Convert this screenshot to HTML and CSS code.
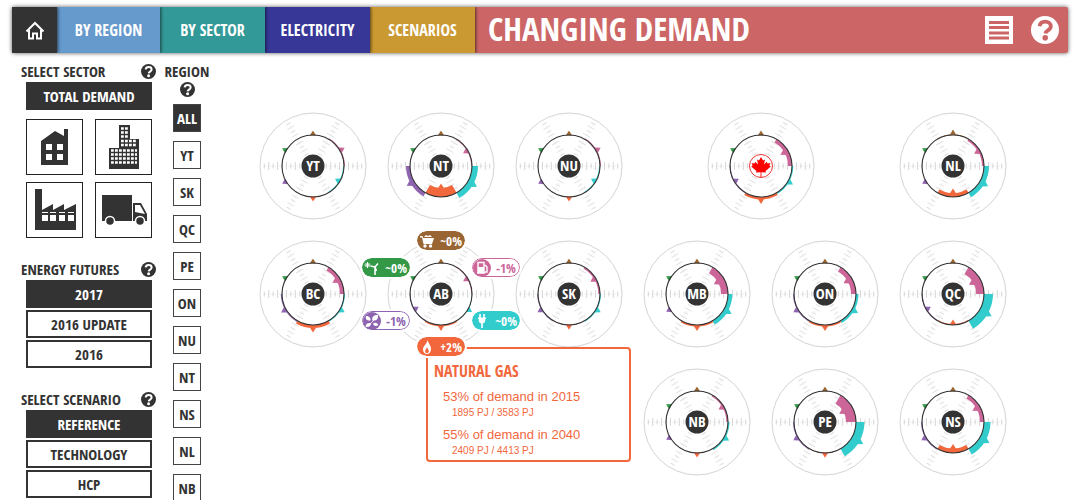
FILE: index.html
```html
<!DOCTYPE html>
<html lang="en">
<head>
<meta charset="utf-8">
<title>Changing Demand</title>
<link rel="stylesheet" href="styles.css">
</head>
<body>
<svg class="defs" aria-hidden="true">
  <symbol id="i-help" viewBox="0 0 28 28"><circle cx="14" cy="14" r="14" fill="var(--disc)"/><path d="M8.600 10.200C9 7.200 11.200 5.600 14.200 5.600c3.400 0 5.600 1.800 5.600 4.600 0 4-5 4-5.400 7.200" fill="none" stroke="var(--mark)" stroke-width="3.800"/><circle cx="14.200" cy="21.800" r="2.800" fill="var(--mark)"/></symbol>
</svg>
<header class="bar">
  <nav class="tabs">
    <a class="tab tab-home" href="#home" aria-label="Home"><svg width="20" height="20" viewBox="0 0 20 20"><path d="M1.500 11.500 10 3l8.500 8.500M4 10v8.500h4v-5h4v5h4V10" fill="none" stroke="#fff" stroke-width="2"/></svg></a>
    <a class="tab tab-region" href="#region">BY REGION</a>
    <a class="tab tab-sector" href="#sector">BY SECTOR</a>
    <a class="tab tab-electricity" href="#electricity">ELECTRICITY</a>
    <a class="tab tab-scenarios" href="#scenarios">SCENARIOS</a>
  </nav>
  <h1 class="title">CHANGING DEMAND</h1>
  <div class="tools">
    <button class="icon-btn" aria-label="Menu"><svg width="28" height="28" viewBox="0 0 28 28"><path fill="#fff" d="M0 0h28v28H0z"/><path d="M4 6.500h20M4 11.500h20M4 17h20M4 22h20" stroke="#cc6666" stroke-width="3"/></svg></button>
    <button class="icon-btn help-light" aria-label="Help"><svg width="28" height="28"><use href="#i-help"/></svg></button>
  </div>
</header>
<div class="page">
  <aside class="side">
    <section class="group">
      <div class="head"><h2>SELECT SECTOR</h2><button class="icon-btn" aria-label="About sectors"><svg width="15" height="15"><use href="#i-help"/></svg></button></div>
      <div class="choices">
        <button class="choice on">TOTAL DEMAND</button>
        <div class="tiles">
          <button class="tile" aria-label="Residential"><svg width="52" height="52" viewBox="0 0 52 52"><path fill="#333" fill-rule="evenodd" d="M12 20 26 10l9 5V8h4v36H12zM17 23v6h6v-6zm11 0v6h6v-6zM17 33v6h6v-6zm11 0v6h6v-6z"/></svg></button>
          <button class="tile" aria-label="Commercial"><svg width="52" height="52" viewBox="0 0 52 52"><path fill="#333" d="M11 27h10V4h11v14h9v30H11z"/><path d="M23 7.500h7M23 11.500h7M23 15.500h7M23 20h16M23 24h16M13 29.500h26M13 33.500h26M13 37.500h26M13 41.500h26" stroke="#fff" stroke-width="2.600" stroke-dasharray="2.800 1.200"/></svg></button>
          <button class="tile" aria-label="Industrial"><svg width="52" height="52" viewBox="0 0 52 52"><path fill="#333" d="M6 5h7v21l11-6v6l11-6v6l12-6v26H6z"/><path fill="#fff" d="M13 28h6v1h-6zm8 0h6v1h-6zm9 0h6v1h-6zm9 0h6v1h-6zM13 31h6v6h-6zm8 0h6v6h-6zm9 0h6v6h-6zm9 0h6v6h-6z"/></svg></button>
          <button class="tile" aria-label="Transportation"><svg width="52" height="52" viewBox="0 0 52 52"><path fill="#333" d="M4 11h30v26H4zM35 19h8l6 11v7H35z"/><path fill="#fff" d="M37 21h5l5 9-10-2z"/><circle cx="12" cy="37" r="4.500" fill="#333" stroke="#fff" stroke-width="1.500"/><circle cx="42" cy="37" r="4.500" fill="#333" stroke="#fff" stroke-width="1.500"/></svg></button>
        </div>
      </div>
    </section>
    <section class="group">
      <div class="head"><h2>ENERGY FUTURES</h2><button class="icon-btn" aria-label="About Energy Futures"><svg width="15" height="15"><use href="#i-help"/></svg></button></div>
      <div class="choices">
        <button class="choice on">2017</button>
        <button class="choice">2016 UPDATE</button>
        <button class="choice">2016</button>
      </div>
    </section>
    <section class="group">
      <div class="head"><h2>SELECT SCENARIO</h2><button class="icon-btn" aria-label="About scenarios"><svg width="15" height="15"><use href="#i-help"/></svg></button></div>
      <div class="choices">
        <button class="choice on">REFERENCE</button>
        <button class="choice">TECHNOLOGY</button>
        <button class="choice">HCP</button>
      </div>
    </section>
  </aside>
  <section class="regions">
    <h2>REGION</h2>
    <button class="icon-btn" aria-label="About regions"><svg width="15" height="15"><use href="#i-help"/></svg></button>
    <div class="region-list">
      <button class="region on">ALL</button>
      <button class="region">YT</button>
      <button class="region">SK</button>
      <button class="region">QC</button>
      <button class="region">PE</button>
      <button class="region">ON</button>
      <button class="region">NU</button>
      <button class="region">NT</button>
      <button class="region">NS</button>
      <button class="region">NL</button>
      <button class="region">NB</button>
    </div>
  </section>
  <main class="map">
    <div class="cell" data-region="YT"></div>
    <div class="cell" data-region="NT"></div>
    <div class="cell" data-region="NU"></div>
    <div class="cell cell-wide" data-region="CA"></div>
    <div class="cell" data-region="NL"></div>
    <div class="cell cell-open" data-region="BC"></div>
    <div class="cell cell-active" data-region="AB">
      <div class="detail">
        <h3>NATURAL GAS</h3>
        <p class="share">53% of demand in 2015</p>
        <p class="amount">1895 PJ / 3583 PJ</p>
        <p class="share">55% of demand in 2040</p>
        <p class="amount">2409 PJ / 4413 PJ</p>
      </div>
      <button class="pill coal"><svg width="16" height="16" viewBox="0 0 16 16"><path fill="#fff" d="M1 3h2.500l.5 2h11l-2 6H4.500L3 4.500H1zM5 4l2-2 2 1 2-1 2 2z"/><circle cx="6" cy="13" r="1.700" fill="#fff"/><circle cx="11.500" cy="13" r="1.700" fill="#fff"/></svg><span>~0%</span></button>
      <button class="pill wind"><svg width="16" height="16" viewBox="0 0 16 16"><path d="M3.500 2v6M.5 5h6M1.500 3l4 4M5.500 3l-4 4" stroke="#fff"/><path d="M11 7v8M11 7 6.500 6M11 7l3-3.500M11 7l1.500 4" stroke="#fff" stroke-width="1.600"/></svg><span>~0%</span></button>
      <button class="pill oil"><svg width="18" height="18" viewBox="0 0 18 18"><circle cx="9" cy="9" r="9" fill="#cc6699"/><path d="M5 3.500h6v10H5zM4 14h8M12 6l2 2v5h-2" fill="none" stroke="#fff" stroke-width="1.400"/><path fill="#fff" d="M5 8h6v5H5z"/></svg><span>-1%</span></button>
      <button class="pill bio"><svg width="18" height="18" viewBox="0 0 18 18"><circle cx="9" cy="9" r="9" fill="#8e63b0"/><path fill="#fff" d="M7.500 8.500C4 9 2 7 3 4c3 0 5 2 4.500 4.500zM9.500 8.500C8.500 5 10.500 3 15 3c.5 4-1.500 6-5.500 5.500zM10 11.500c3-1.500 5-.5 5 2-3 1-4.500 0-5-2zM8 11c0 3.500-2.500 4.500-5.500 3.500C3 11.500 5 10.500 8 11z"/><path d="M3 15c3-2 6-4 10-10" fill="none" stroke="#fff" stroke-width=".8"/></svg><span>-1%</span></button>
      <button class="pill elec"><svg width="16" height="16" viewBox="0 0 16 16"><path d="M6 1v4M10 1v4M8 9v6" stroke="#fff" stroke-width="1.600"/><path fill="#fff" d="M4 4.500h8V6h-.8v1.500c0 2-1.200 3-3.200 3s-3.200-1-3.200-3V6H4z"/></svg><span>~0%</span></button>
      <button class="pill gas"><svg width="16" height="16" viewBox="0 0 16 16"><path fill="#fff" fill-rule="evenodd" d="M8.500 1c.5 3 3.500 5 3.500 9 0 3-1.700 5-4 5s-4-2-4-4.600C4 7 8 5 8.500 1zM8 8c-.5 2-1.800 2.500-1.800 4.200C6.200 13.500 7 14 8 14s1.800-.7 1.800-1.800C9.800 10.500 8.500 10 8 8z"/></svg><span>+2%</span></button>
    </div>
    <div class="cell" data-region="SK"></div>
    <div class="cell" data-region="MB"></div>
    <div class="cell" data-region="ON"></div>
    <div class="cell" data-region="QC"></div>
    <div class="cell cell-east" data-region="NB"></div>
    <div class="cell" data-region="PE"></div>
    <div class="cell" data-region="NS"></div>
  </main>
</div>
<script src="wheels.js"></script>
</body>
</html>
```
FILE: styles.css
```css
:root {
  --ink: #333333;
  --disc: #333333;
  --mark: #ffffff;
  --gas: #f2673c;
  --narrow: "Avenir Next Condensed", "Open Sans Condensed", "Roboto Condensed", "Liberation Sans Narrow", "Open Sans", sans-serif;
}
* { box-sizing: border-box; }
body { margin: 0; background: #fff; color: var(--ink); font-family: var(--narrow); font-weight: 700; overflow-x: hidden; }
h1, h2, h3, p { margin: 0; font-weight: 700; }
button { font: inherit; color: inherit; padding: 0; border: 0; background: none; cursor: pointer; }
svg { display: block; }
.defs { width: 0; height: 0; position: absolute; }

.bar { display: flex; height: 46px; margin: 7px 11px 0 12px; background: #cc6666; border-radius: 2px; box-shadow: 0 0 4px #555; color: #fff; }
.tabs { display: flex; }
.tab { display: flex; align-items: center; justify-content: center; width: 105px; color: #fff; text-decoration: none; font-size: 16px; box-shadow: 1px 0 3px rgba(0, 0, 0, .6); clip-path: inset(0 -4px 0 0); }
.tab-home { width: 45px; background: #333; z-index: 5; }
.tab-region { width: 103px; background: #6699cc; z-index: 4; }
.tab-sector { background: #339998; z-index: 3; }
.tab-electricity { background: #363796; z-index: 2; }
.tab-scenarios { background: #cb9932; z-index: 1; }
.title { flex: 1; padding-left: 13px; font-size: 33px; line-height: 44px; white-space: nowrap; }
.tools { display: flex; align-items: center; gap: 18px; padding-right: 9px; }
.help-light { --disc: #ffffff; --mark: #cc6666; }

.page { display: flex; align-items: flex-start; }
.side { width: 135px; margin-left: 21px; padding-top: 9px; }
.head { display: flex; align-items: center; justify-content: space-between; height: 18px; }
h2 { font-size: 15px; line-height: 18px; white-space: nowrap; }
.group { margin-bottom: 22px; }
.choices { display: flex; flex-direction: column; gap: 2px; padding: 2px 4px 0 5px; }
.choice { height: 28px; border: 2px solid var(--ink); font-size: 15px; line-height: 20px; }
.on { background: var(--ink); color: #fff; }
.tiles { display: grid; grid-template-columns: 57px 57px; justify-content: space-between; gap: 7px 0; padding-top: 7px; }
.tile { height: 56px; border: 1px solid #222; display: grid; place-items: center; }

.regions { display: flex; flex-direction: column; align-items: center; width: 44px; margin-left: 9px; padding-top: 9px; }
.regions .icon-btn { margin-top: 2px; }
.region-list { display: flex; flex-direction: column; gap: 9px; padding-top: 7px; }
.region { width: 28px; height: 28px; border: 1px solid #444; font-size: 15px; line-height: 20px; }

.map { flex: 1; display: grid; grid-template-columns: repeat(6, 1fr); padding: 49px 62px 0 40px; }
.cell { height: 128px; display: grid; place-items: center; position: relative; }
.cell-wide { grid-column: span 2; }
.cell-open { grid-column-start: 1; }
.cell-east { grid-column-start: 4; }
.cell-active { z-index: 1; }
.wheel { width: 108px; height: 108px; }
.wheel text { font-family: var(--narrow); font-weight: 700; font-size: 15px; fill: #fff; text-anchor: middle; }

.pill { position: absolute; display: flex; align-items: center; justify-content: space-between; width: 48px; height: 19px; padding: 0 3px 0 2px; border-radius: 10px; color: #fff; font-size: 13px; line-height: 18px; outline: 2px solid #fff; left: calc(50% - 24px); }
.coal { top: 1px; background: #996633; }
.wind { top: 28px; margin-left: -55px; background: #339947; }
.oil { top: 28px; margin-left: 55px; background: #fff; color: #cc6699; border: 1px solid #cc6699; padding-left: 0; }
.bio { top: 81px; margin-left: -55px; background: #fff; color: #8e63b0; border: 1px solid #8e63b0; padding-left: 0; }
.elec { top: 81px; margin-left: 55px; background: #33cccc; }
.gas { top: 107px; background: var(--gas); }
.detail { position: absolute; left: calc(50% - 15px); top: 117px; width: 205px; padding: 12px 6px 3px; border: 2px solid var(--gas); border-radius: 4px; color: var(--gas); }
.detail h3 { font-size: 16px; line-height: 20px; }
.share { padding: 6px 0 0 9px; font-family: "Liberation Sans Narrow", "Liberation Sans", sans-serif; font-size: 13px; line-height: 19px; font-weight: 400; white-space: nowrap; }
.amount { padding-left: 18px; font-family: "Liberation Sans Narrow", "Liberation Sans", sans-serif; font-size: 10px; line-height: 13px; font-weight: 400; }
```
FILE: wheels.js
```js
// Change in share per fuel, in ring units: positive grows outward, negative inward.
// Order: coal, oil, electricity, gas, bio, wind (clockwise from the top).
const fuels = ['#996633', '#cc6699', '#33cccc', '#f2673c', '#8e63b0', '#339947'];
const regions = {
  YT: [0, 0.9, -1, 0, 0, 0],
  NT: [0, -0.9, 6, -9, 4, 0],
  NU: [0, 0.9, -1, 0, 0, 0],
  CA: [0, -4, 1.3, 2.4, -0.8, 0],
  NL: [0.8, -2, 5, -4, 0, 0],
  BC: [0, -4, 1, 3, 1.2, 0],
  AB: [0, -0.8, 0.3, 1.4, -0.7, 0],
  SK: [0, -1.7, 1, 0.2, 0.8, 0],
  MB: [0, -7, 4.3, 1.5, 0, 0],
  ON: [0, -5, 2.5, 1.5, 1, 0],
  QC: [0, -8, 9, -1, -0.8, 0],
  NB: [0, -1.6, 1.5, 0, 0, 0],
  PE: [0, -10, 8.5, 0.2, 1, 0],
  NS: [0, -4, 6.5, -4.5, 1, 0]
};
const RING = 31;

function point(r, deg) {
  const a = (deg - 90) * Math.PI / 180;
  return (r * Math.cos(a)).toFixed(2) + ' ' + (r * Math.sin(a)).toFixed(2);
}

function axis(deg) {
  let d = '';
  for (let k = -4; k <= 4; k++) {
    const r = RING + k * 4.43;
    d += k % 2 ? `M-4 ${-r}h8` : `M-2.500 ${-r}h5`;
  }
  const tone = deg % 180 === 90 ? '#d6d6d6' : '#e2e2e2';
  return `<g transform="rotate(${deg})" stroke="${tone}"><path d="${d}"/><path d="M0-13V-50" stroke-dasharray="1 1.200" opacity=".5"/></g>`;
}

function segment(value, i) {
  const mid = i * 60;
  const edge = RING + value;
  const dir = value < 0 ? -1 : 1;
  const arc = value
    ? `<path fill="${fuels[i]}" d="M${point(RING, mid - 30)}A${RING} ${RING} 0 0 1 ${point(RING, mid + 30)}L${point(edge, mid + 30)}A${edge} ${edge} 0 0 0 ${point(edge, mid - 30)}Z"/>`
    : '';
  return arc + `<path transform="rotate(${mid})" fill="${fuels[i]}" d="M-3.200 ${-edge + dir * 0.6}h6.400L0 ${-edge - dir * 4.6}Z"/>`;
}

const leaf = '<circle r="11.500" fill="#fff" stroke="#e33"/><path fill="#f00" d="M0-9l2 3.600 2-1-1 4.800 2.800-2.600.8 1.600 2.800-.5-1 2.600 1.400 1L4.600 5 5 6.600.4 6.200.5 11h-1l.1-4.800L-5 6.600-4.600 5-9.800.5l1.400-1-1-2.600 2.800.5.8-1.600L-3-1.600-4-6.400l2 1z"/>';

document.querySelectorAll('[data-region]').forEach(cell => {
  const name = cell.dataset.region;
  const centre = name === 'CA'
    ? leaf
    : `<circle r="11.500" fill="#333"/><text y="5">${name}</text>`;
  cell.insertAdjacentHTML('afterbegin',
    `<svg class="wheel" viewBox="-54 -54 108 108"><circle r="53" fill="none" stroke="#d4d4d4"/>` +
    [30, 90, 150, 210, 270, 330].map(axis).join('') +
    regions[name].map(segment).join('') +
    `<circle r="${RING}" fill="none" stroke="#333" stroke-width="1.100"/>${centre}</svg>`);
});
```
